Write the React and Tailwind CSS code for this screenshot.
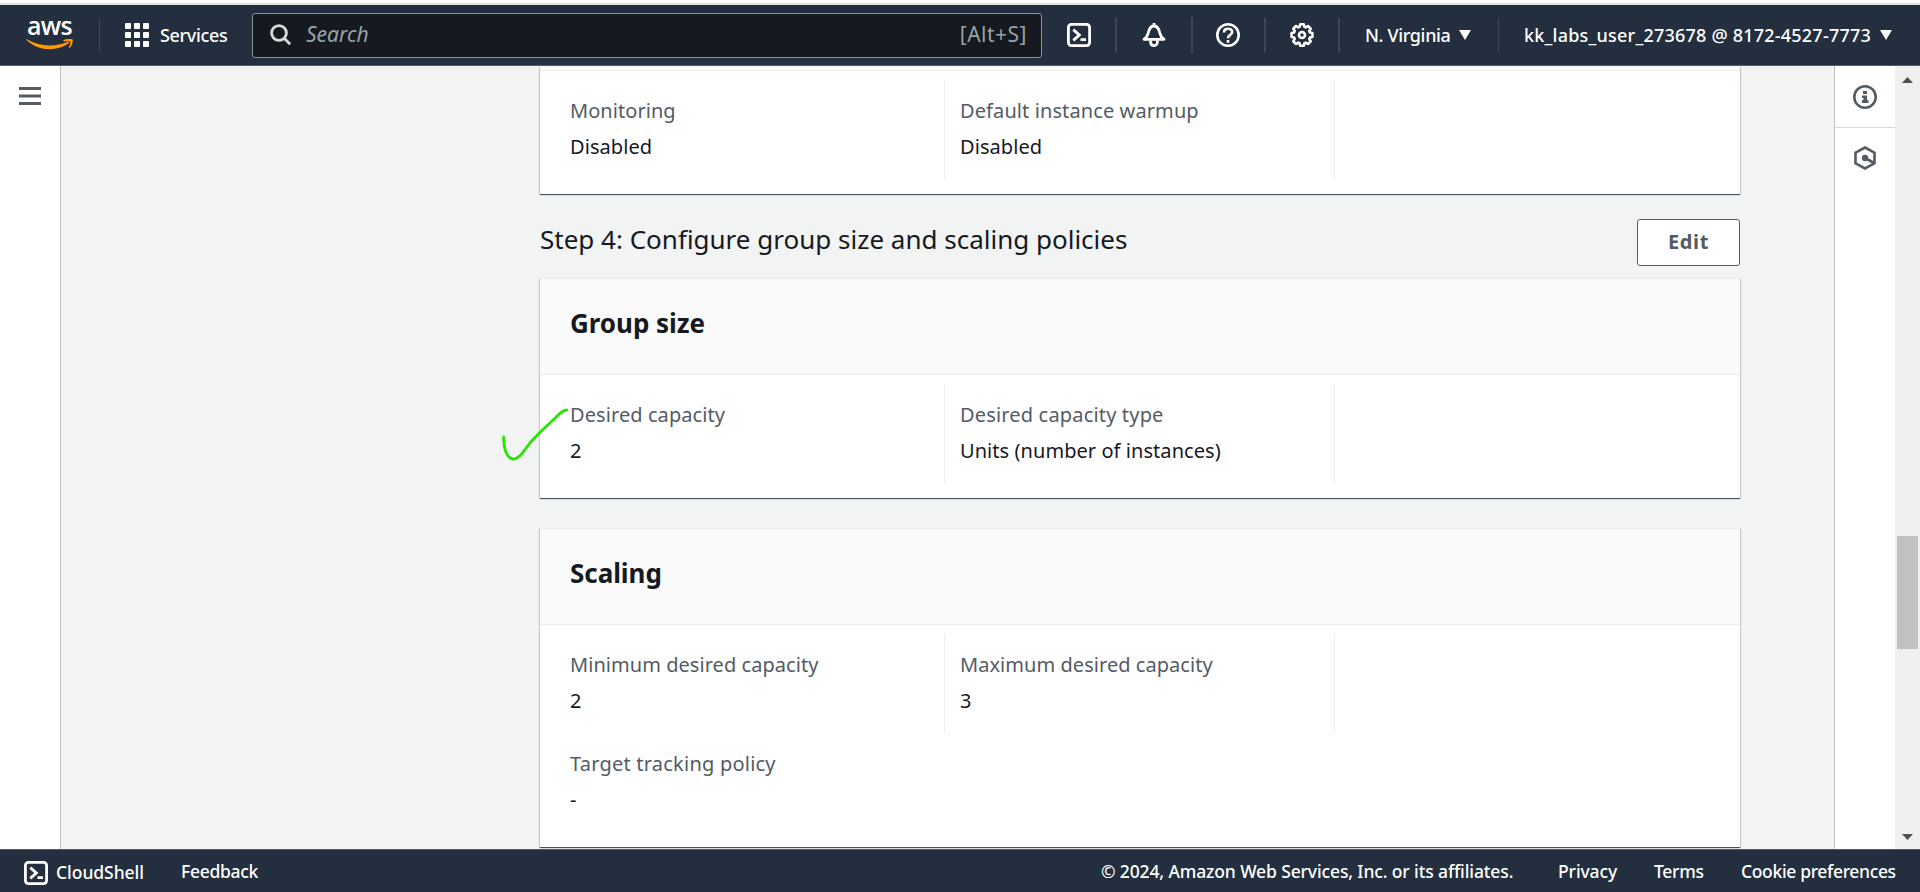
function Terminal() {
  return (
    <svg className="h-6 w-6 shrink-0" viewBox="0 0 24 24" fill="none" stroke="currentColor" strokeWidth="2.8">
      <rect x="1.4" y="1.4" width="21.2" height="21.2" rx="3" />
      <path d="M6.3 6.6l6 5.4-6 5.4M13.5 16.7h5.5" />
    </svg>
  );
}

function AwsLogo() {
  return (
    <div className="flex h-[60px] w-[47px] flex-col items-center pt-[7px]">
      <span className="h-[27px] font-['Open_Sans'] text-[25px] leading-[27px] font-semibold tracking-[-0.7px]">aws</span>
      <svg className="h-[11px] w-[47px]" viewBox="0 0 47 11">
        <path d="M0.4 0.9C0 0.2 1 0.2 1.7 0.7C14 7.8 29 8 41.5 2.9c1.300-.5 2 .7.9 1.600C30 13 12 12 .4.9z" fill="#f90" />
        <path d="M37.500 1.200C40 -.6 46 -.5 46.700.6C47.200 2 46 7 43.500 9c-.5.400-.9.200-.7-.3c.8-2 2-5 1.400-6c-.6-.8-4-.5-6-.3c-.9.100-1.300-.7-.7-1.200z" fill="#f90" />
      </svg>
    </div>
  );
}

function Field({ label, value, tracking = "tracking-[0.05px]" }) {
  return (
    <div className="flex flex-col text-xl leading-[30px]">
      <span className={`text-[#545b64] ${tracking}`}>{label}</span>
      <span className="mt-1.5 tracking-[0.06px]">{value}</span>
    </div>
  );
}

function Columns({ items }) {
  return (
    <div className="flex h-[99px] pl-[30px]">
      <div className="w-[374px] pt-4">{items[0]}</div>
      <div className="w-[390px] border-l border-[#eaeded] pt-4 pl-[15px]">{items[1]}</div>
      <div className="border-l border-[#eaeded]" />
    </div>
  );
}

const card =
  "w-[1200px] bg-white shadow-[0_1px_1px_0_rgba(0,28,36,0.3),1px_1px_1px_0_rgba(0,28,36,0.15),-1px_1px_1px_0_rgba(0,28,36,0.15),0_1px_0_0_#879596]";

function CardHeader({ children }) {
  return (
    <div className="h-[97px] border-t border-b border-[#eaeded] bg-[#fafafa] pt-[26px] pl-[30px] text-[26px] leading-[37px] font-bold tracking-[-0.05px]">
      {children}
    </div>
  );
}

function Caret() {
  return (
    <svg className="h-[10px] w-3 shrink-0" viewBox="0 0 12 10">
      <path d="M0 0h12L6 10z" fill="currentColor" />
    </svg>
  );
}

function Nav() {
  return (
    <header className="flex h-[61px] shrink-0 items-center border-b border-[#545b64] bg-[#232f3e] pl-[26px] text-lg font-medium text-white">
      <AwsLogo />
      <div className="ml-[26px] h-[34px] w-px bg-[#414750]" />
      <svg className="ml-[25px] h-6 w-6" viewBox="0 0 24 24" fill="currentColor">
        {[0, 9, 18].map((y) => [0, 9, 18].map((x) => <rect key={`${x}-${y}`} x={x} y={y} width="6" height="6" rx="0.8" />))}
      </svg>
      <span className="ml-[11px] w-[92px] tracking-[-0.35px]">Services</span>
      <div className="flex h-[45px] w-[790px] items-center rounded-[3px] border border-[#879596] bg-[#16191f] pr-[14px] pl-[17px] text-xl font-normal text-[#95a5a6]">
        <svg className="h-[22px] w-[22px]" viewBox="0 0 22 22" fill="none" stroke="#d5dbdb" strokeWidth="2.8">
          <circle cx="9" cy="9" r="7.400" />
          <path d="M14.200 14.200l6 6" />
        </svg>
        <span className="ml-[14px] text-[21px] italic">Search</span>
        <span className="ml-auto text-[21px] tracking-[0.5px]">[Alt+S]</span>
      </div>
      <div className="ml-[25px]"><Terminal /></div>
      <div className="ml-6 h-[34px] w-0.5 bg-[#414750]" />
      <svg className="ml-[25px] h-6 w-6" viewBox="0 0 24 24" fill="none" stroke="currentColor" strokeWidth="2.800" strokeLinejoin="round">
        <path d="M12 0v3M2 16.300h20C17.500 13.500 18.500 11 17 7.500C16 4.500 14.500 3 12 3S8 4.500 7 7.500C5.500 11 6.500 13.500 2 16.300z" />
        <path d="M8.600 17.500v1.600c0 4.700 6.800 4.700 6.800 0v-1.600" />
      </svg>
      <div className="ml-[25px] h-9 w-0.5 bg-[#414750]" />
      <svg className="ml-[23px] h-6 w-6" viewBox="0 0 24 24" fill="none" stroke="currentColor" strokeWidth="2.600">
        <circle cx="12" cy="12" r="10.700" />
        <path d="M8 9.500c0-5 8.200-4.800 8.200-.5c0 3-4.200 2.700-4.200 6.200M12 17v2.700" />
      </svg>
      <div className="ml-6 h-[34px] w-0.5 bg-[#414750]" />
      <svg className="ml-6 h-6 w-6" viewBox="0 0 24 24" fill="none" stroke="currentColor" strokeWidth="2.600" strokeLinejoin="round">
        <path d="M10.200 1.300h3.600l.6 2.500 1.400.6 2.200-1.400 2.700 2.700-1.400 2.200.6 1.500 2.500.6v4l-2.500.6-.6 1.500 1.400 2.200-2.700 2.700-2.200-1.400-1.400.6-.6 2.500h-3.600l-.6-2.500-1.400-.6L6 21l-2.700-2.700 1.400-2.200-.6-1.500-2.500-.6v-4l2.500-.6.6-1.500-1.400-2.200L6 3l2.200 1.400 1.400-.6z" />
        <circle cx="12" cy="12" r="3" />
      </svg>
      <div className="ml-6 h-[34px] w-0.5 bg-[#414750]" />
      <span className="ml-[25px] w-[94px] tracking-[-0.35px] whitespace-nowrap">N. Virginia</span>
      <Caret />
      <div className="ml-[27px] h-[34px] w-px bg-[#414750]" />
      <span className="ml-[25px] w-[356px] tracking-[0.22px] whitespace-nowrap">kk_labs_user_273678 @ 8172-4527-7773</span>
      <Caret />
    </header>
  );
}

export default function App() {
  return (
    <div className="flex h-[892px] w-[1920px] flex-col overflow-hidden bg-white font-['Noto_Sans',sans-serif] text-[#16191f]">
      <div className="mt-[3px] h-0.5 shrink-0 bg-[#e1e3e3]" />
      <Nav />
      <div className="flex min-h-0 flex-1 bg-[#f2f3f3]">
        <aside className="w-[61px] border-r border-[#bcc4c6] bg-white pt-[21px] pl-[19px]">
          <svg className="h-[18px] w-[22px]" viewBox="0 0 22 18" fill="#545b64">
            <path d="M0 0h22v3H0zM0 7.500h22v3H0zM0 15h22v3H0z" />
          </svg>
        </aside>
        <main className="relative flex-1 pl-[479px]">
          <section className={`${card} h-32`}>
            <div className="mb-[9px] h-[5px] border-b border-[#eaeded] bg-[#fafafa]" />
            <Columns items={[<Field label="Monitoring" value="Disabled" />, <Field label="Default instance warmup" value="Disabled" tracking="tracking-[0.1px]" />]} />
          </section>
          <div className="flex h-[84px] w-[1200px] justify-between">
            <h2 className="pt-[27px] text-[26px] leading-[37px]">Step 4: Configure group size and scaling policies</h2>
            <button className="mt-[25px] h-[47px] w-[103px] rounded-[3px] border border-[#545b64] bg-white pb-0.5 text-xl font-bold tracking-[0.6px] text-[#545b64]">Edit</button>
          </div>
          <section className={`${card} h-[220px]`}>
            <CardHeader>Group size</CardHeader>
            <div className="h-[9px]" />
            <Columns items={[<Field label="Desired capacity" value="2" tracking="tracking-[0.08px]" />, <Field label="Desired capacity type" value="Units (number of instances)" tracking="tracking-[0.17px]" />]} />
          </section>
          <section className={`${card} mt-[30px] h-[319px]`}>
            <CardHeader>Scaling</CardHeader>
            <div className="h-[9px]" />
            <Columns items={[<Field label="Minimum desired capacity" value="2" />, <Field label="Maximum desired capacity" value="3" />]} />
            <div className="pt-4 pl-[30px]"><Field label="Target tracking policy" value="-" tracking="tracking-[0.22px]" /></div>
          </section>
          <svg className="absolute top-[339px] left-[437px] h-[60px] w-[75px]" viewBox="498 405 75 60" fill="none" stroke="#26e600" strokeWidth="2.800" strokeLinecap="round">
            <path d="M503.700 437c-.3 10 2.500 21 9 22c6.500 1 12-9.500 18-17c8-9 15-15 25-24.500c4-4 7-7.500 11-7.500" />
          </svg>
        </main>
        <aside className="flex w-[61px] flex-col items-center border-l border-[#bcc4c6] bg-white text-[#545b64]">
          <div className="flex h-[62px] w-full justify-center border-b border-[#d5dbdb] pt-[19px]">
            <svg className="h-6 w-6" viewBox="0 0 24 24">
              <circle cx="12" cy="12" r="10.700" fill="none" stroke="currentColor" strokeWidth="2.600" />
              <path d="M10 6h4v3h-4zM9 10.500h5V15h1.500v3H9v-3h1.500v-2H9z" fill="currentColor" />
            </svg>
          </div>
          <svg className="mt-[18px] h-6 w-6" viewBox="0 0 24 24" fill="none" stroke="currentColor" strokeWidth="2.600">
            <path d="M12 1.500l9.500 5.200v10.600L12 22.500l-9.500-5.200V6.700zM12 12l9 5" />
            <circle cx="12" cy="12" r="3.200" fill="currentColor" stroke="none" />
          </svg>
        </aside>
        <div className="flex w-[25px] flex-col items-center bg-[#f0f0f0]">
          <svg className="mt-[11px] h-1.5 w-[11px]" viewBox="0 0 11 6"><path d="M0 6h11L5.500 0z" fill="#505050" /></svg>
          <div className="mt-[453px] h-[113px] w-[21px] bg-[#c1c1c1]" />
          <svg className="mt-auto mb-[9px] h-1.5 w-[11px]" viewBox="0 0 11 6"><path d="M0 0h11L5.500 6z" fill="#505050" /></svg>
        </div>
      </div>
      <footer className="flex h-[43px] shrink-0 items-center border-t border-[#545b64] bg-[#232f3e] pr-6 pl-6 text-[17.5px] font-medium text-white">
        <div className="mt-[3px]"><Terminal /></div>
        <span className="mt-0.5 ml-2 w-[125px] tracking-[-0.05px]">CloudShell</span>
        <span className="mt-px tracking-[-0.3px]">Feedback</span>
        <div className="mt-px ml-auto flex whitespace-nowrap">
          <span className="w-[457px] tracking-[-0.13px]">© 2024, Amazon Web Services, Inc. or its affiliates.</span>
          <span className="w-24 tracking-[-0.1px]">Privacy</span>
          <span className="w-[87px] tracking-[-0.3px]">Terms</span>
          <span className="w-[155px] tracking-[-0.35px]">Cookie preferences</span>
        </div>
      </footer>
    </div>
  );
}
